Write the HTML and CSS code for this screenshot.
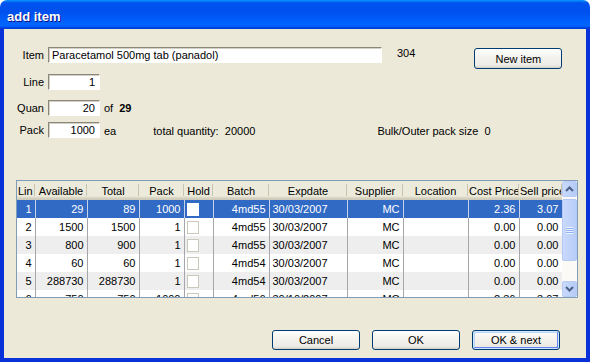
FILE: index.html
```html
<!DOCTYPE html>
<html lang="en">

<head>
    <meta charset="UTF-8">
    <title>add item</title>
    <link rel="stylesheet" href="styles.css">
</head>

<body>
    <div class="window">
        <div class="titlebar">
            <span class="title">add item</span>
        </div>
        <div class="client">
            <div class="form">
                <div class="row row-item">
                    <span class="lbl">Item</span>
                    <div class="field field-item">Paracetamol 500mg tab (panadol)</div>
                    <span class="code">304</span>
                    <button class="btn btn-new">New item</button>
                </div>
                <div class="row row-line">
                    <span class="lbl">Line</span>
                    <div class="field num">1</div>
                </div>
                <div class="row row-quan">
                    <span class="lbl">Quan</span>
                    <div class="field num">20</div>
                    <span class="of">of</span>
                    <b class="avail">29</b>
                </div>
                <div class="row row-pack">
                    <span class="lbl">Pack</span>
                    <div class="field num">1000</div>
                    <span class="ea">ea</span>
                    <span class="total">total quantity:&nbsp; 20000</span>
                    <span class="bulk">Bulk/Outer pack size&nbsp; 0</span>
                </div>
            </div>

            <div class="grid">
                <div class="grid-view">
                    <table>
                        <colgroup>
                            <col style="width:18px">
                            <col style="width:52px">
                            <col style="width:52px">
                            <col style="width:45px">
                            <col style="width:29px">
                            <col style="width:56px">
                            <col style="width:78px">
                            <col style="width:56px">
                            <col style="width:65px">
                            <col style="width:51px">
                            <col style="width:43px">
                        </colgroup>
                        <thead>
                            <tr>
                                <th class="left">Lin</th>
                                <th>Available</th>
                                <th>Total</th>
                                <th>Pack</th>
                                <th>Hold</th>
                                <th>Batch</th>
                                <th>Expdate</th>
                                <th>Supplier</th>
                                <th>Location</th>
                                <th>Cost Price</th>
                                <th class="left">Sell price</th>
                            </tr>
                        </thead>
                        <tbody id="rows"></tbody>
                    </table>
                </div>
                <div class="vscroll">
                    <div class="sb-btn">
                        <svg width="9" height="6" viewBox="0 0 9 6"><polyline points="1,5 4.5,1.5 8,5" fill="none" stroke="#4d6185" stroke-width="2"/></svg>
                    </div>
                    <div class="thumb"><span class="grip"></span></div>
                    <div class="track"></div>
                    <div class="sb-btn">
                        <svg width="9" height="6" viewBox="0 0 9 6"><polyline points="1,1 4.5,4.5 8,1" fill="none" stroke="#4d6185" stroke-width="2"/></svg>
                    </div>
                </div>
            </div>

            <div class="actions">
                <button class="btn">Cancel</button>
                <button class="btn">OK</button>
                <button class="btn btn-default">OK &amp; next</button>
            </div>
        </div>
    </div>

    <script>
        const stock = [
            ['1', '29', '89', '1000', '4md55', '30/03/2007', 'MC', '', '2.36', '3.07'],
            ['2', '1500', '1500', '1', '4md55', '30/03/2007', 'MC', '', '0.00', '0.00'],
            ['3', '800', '900', '1', '4md55', '30/03/2007', 'MC', '', '0.00', '0.00'],
            ['4', '60', '60', '1', '4md54', '30/03/2007', 'MC', '', '0.00', '0.00'],
            ['5', '288730', '288730', '1', '4md54', '30/03/2007', 'MC', '', '0.00', '0.00'],
            ['6', '750', '750', '1000', '4md56', '30/10/2007', 'MC', '', '2.36', '3.07']
        ];

        const rows = document.getElementById('rows');
        stock.forEach((item, i) => {
            const tr = document.createElement('tr');
            if (i === 0) tr.className = 'selected';
            else if (i % 2 === 0) tr.className = 'alt';

            item.forEach((value, col) => {
                const td = document.createElement('td');
                if (col === 4) {
                    const hold = document.createElement('td');
                    hold.innerHTML = '<span class="chk"></span>';
                    tr.appendChild(hold);
                }
                td.textContent = value;
                if (col === 5) td.className = 'left';
                tr.appendChild(td);
            });
            rows.appendChild(tr);
        });
    </script>
</body>

</html>
```

FILE: styles.css
```css
body {
    margin: 0;
    padding: 0;
    background: #fff;
    font-family: 'Liberation Sans', Arial, sans-serif;
    font-size: 11px;
    color: #000;
}

.window {
    width: 590px;
    height: 362px;
    display: flex;
    flex-direction: column;
}

.titlebar {
    height: 26px;
    padding: 3px 0 0 7px;
    border-radius: 7px 7px 0 0;
    background: linear-gradient(to bottom, #0997ff 0, #0053ee 10%, #0050ee 40%, #0066ff 86%, #005bff 92%, #003dd7 96%, #003dd7 100%);
    display: flex;
    align-items: center;
}

.title {
    color: #fff;
    font-weight: bold;
    font-size: 13px;
    text-shadow: 1px 1px #0f1089;
}

.client {
    flex: 1;
    background: #ece9d8;
    border: 4px solid #0831d9;
    border-top: none;
    display: flex;
    flex-direction: column;
}

.form {
    padding-top: 18px;
}

.row {
    display: flex;
    align-items: center;
    height: 16px;
}

.row-line {
    margin-top: 11px;
}

.row-quan {
    margin-top: 10px;
}

.row-pack {
    margin-top: 6px;
}

.lbl {
    width: 40px;
    text-align: right;
    margin-right: 4px;
}

.field {
    box-sizing: border-box;
    height: 16px;
    width: 52px;
    background: #fff;
    border: 1px solid;
    border-color: #8a8778 #fff #fff #8a8778;
    box-shadow: inset 1px 1px #d4d0c8;
    padding: 0 4px;
    line-height: 14px;
    white-space: nowrap;
}

.field-item {
    width: 334px;
    padding-left: 3px;
    font-family: 'Liberation Sans Narrow', 'Liberation Sans', Arial, sans-serif;
    font-size: 11px;
}

.num {
    text-align: right;
}

.code {
    margin: -4px 0 0 15px;
}

.btn {
    box-sizing: border-box;
    width: 88px;
    height: 20px;
    padding: 0;
    border: 1px solid #003c74;
    border-radius: 3px;
    background: linear-gradient(to bottom, #fff 0, #f4f3ee 40%, #ecebe6 85%, #d6d0c5 100%);
    font-family: inherit;
    font-size: 11px;
    color: #000;
}

.btn-new {
    height: 21px;
    margin-left: 59px;
    align-self: flex-start;
    margin-top: 1px;
}

.of {
    margin-left: 4px;
}

.avail {
    margin-left: 6px;
}

.ea {
    margin-left: 4px;
    margin-top: 1px;
}

.total {
    margin-left: 37px;
    margin-top: 1px;
}

.bulk {
    margin-left: 122px;
    margin-top: 1px;
}

.grid {
    box-sizing: border-box;
    width: 562px;
    height: 118px;
    margin: 42px 0 0 12px;
    border: 1px solid #7f9db9;
    background: #fff;
    display: flex;
    overflow: hidden;
}

.grid-view {
    width: 545px;
    overflow: hidden;
}

table {
    table-layout: fixed;
    border-collapse: collapse;
    width: 545px;
}

th {
    height: 19px;
    padding: 0 1px;
    font-weight: normal;
    text-align: center;
    white-space: nowrap;
    overflow: hidden;
    background: linear-gradient(to bottom, #ebeadb 0, #ebeadb 80%, #e2decd 84%, #d6d2c2 90%, #cbc7b8 100%);
    position: relative;
}

th::after {
    content: '';
    position: absolute;
    right: 0;
    top: 3px;
    bottom: 4px;
    width: 1px;
    background: #c7c5b2;
    box-shadow: 1px 0 #fff;
}

th.left {
    text-align: left;
}

td {
    height: 18px;
    padding: 0 3px 0 2px;
    text-align: right;
    white-space: nowrap;
    overflow: hidden;
    border-right: 1px solid #a7a6aa;
}

td.left {
    text-align: left;
    padding-left: 3px;
}

tr.alt td {
    background: #eeeeee;
}

tr.selected td {
    background: #316ac5;
    color: #fff;
    border-right-color: #c7d3ea;
}

.chk {
    display: block;
    box-sizing: border-box;
    width: 12px;
    height: 13px;
    border: 1px solid #cac8bb;
    background: #fff;
}

tr.selected .chk {
    border-color: #fff;
}

.vscroll {
    width: 15px;
    display: flex;
    flex-direction: column;
    background: #fbfaf6;
}

.sb-btn {
    box-sizing: border-box;
    height: 16px;
    border: 1px solid #b9cbf3;
    border-radius: 2px;
    background: linear-gradient(to right, #c8d9fc, #b5cbf7);
    display: flex;
    align-items: center;
    justify-content: center;
}

.thumb {
    box-sizing: border-box;
    height: 62px;
    margin-top: 2px;
    border: 1px solid #b4c8f6;
    border-radius: 2px;
    background: linear-gradient(to right, #cad9fd, #b8cdf8);
    display: flex;
    align-items: center;
    justify-content: center;
}

.grip {
    width: 7px;
    height: 7px;
    background: repeating-linear-gradient(to bottom, #eef4fe 0, #eef4fe 1px, #8cb0f8 1px, #8cb0f8 2px);
}

.track {
    flex: 1;
}

.actions {
    display: flex;
    justify-content: flex-end;
    gap: 12px;
    padding-right: 26px;
    margin-top: 32px;
}

.btn-default {
    box-shadow: inset 0 0 0 1px #cee7ff, inset -1px -1px 0 1px #6982ee, inset 1px 1px 0 1px #bcd4f6;
}
```
